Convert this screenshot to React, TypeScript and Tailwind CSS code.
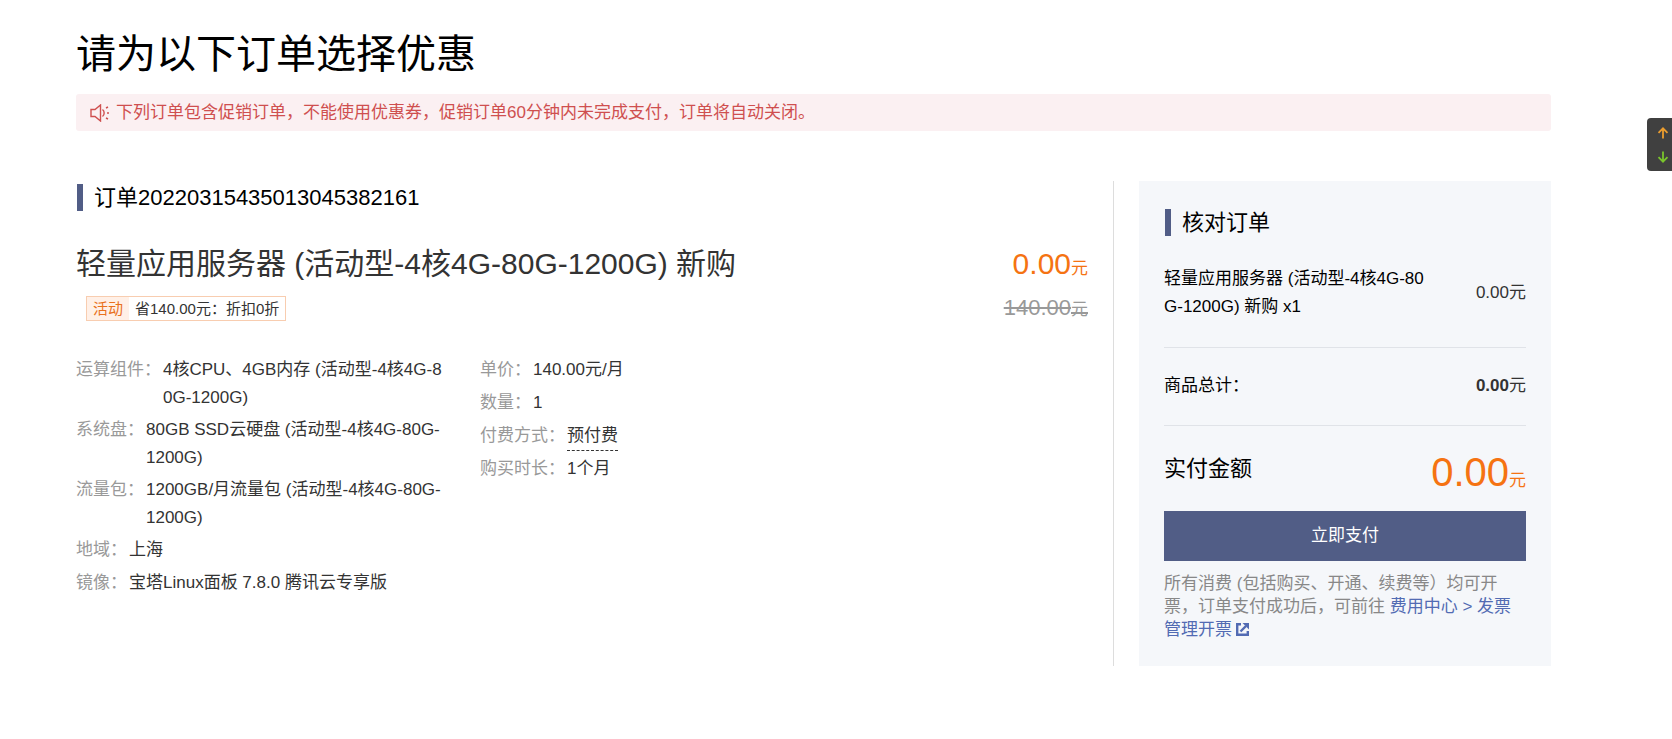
import type { ReactNode } from "react";

type Spec = { label: string; value: string; dashed?: boolean };

const resourceSpecs: Spec[] = [
  { label: "运算组件", value: "4核CPU、4GB内存 (活动型-4核4G-80G-1200G)" },
  { label: "系统盘", value: "80GB SSD云硬盘 (活动型-4核4G-80G-1200G)" },
  { label: "流量包", value: "1200GB/月流量包 (活动型-4核4G-80G-1200G)" },
  { label: "地域", value: "上海" },
  { label: "镜像", value: "宝塔Linux面板 7.8.0 腾讯云专享版" },
];

const billingSpecs: Spec[] = [
  { label: "单价", value: "140.00元/月" },
  { label: "数量", value: "1" },
  { label: "付费方式", value: "预付费", dashed: true },
  { label: "购买时长", value: "1个月" },
];

function SectionHeading({ children }: { children: ReactNode }) {
  return (
    <h2 className="flex h-[33px] items-center gap-[11px] pl-px text-[22px] text-black">
      <span className="h-[27px] w-[6px] bg-[#515d86]" />
      {children}
    </h2>
  );
}

function Yuan() {
  return <span className="text-[17px] leading-none">元</span>;
}

function SpecList({ specs, className }: { specs: Spec[]; className?: string }) {
  return (
    <dl className={className}>
      {specs.map((s) => (
        <div key={s.label} className="flex min-h-[33px] gap-0.5 pb-1 leading-[28px]">
          <dt className="shrink-0 text-[#999]">{s.label}：</dt>
          <dd className={s.dashed ? "border-b border-dashed border-[#333]" : "break-all"}>{s.value}</dd>
        </div>
      ))}
    </dl>
  );
}

function SpeakerIcon() {
  return (
    <svg className="h-[18px] w-[20px] shrink-0" viewBox="0 0 20 18" fill="none" stroke="currentColor" strokeWidth="1.4">
      <path d="M1 5.500h4L10.500 1v16L5 12.500H1z" />
      <path d="M12.500 5.500c2.200 1.600 2.200 5.400 0 7" />
      <path d="M16 4l2-1M17 9h2M16 14l2 1" />
    </svg>
  );
}

function ExternalIcon() {
  return (
    <svg className="ml-1 inline-block size-[13px] align-[-1px]" viewBox="0 0 13 13" fill="none" stroke="currentColor" strokeWidth="2.4">
      <path d="M5 1.200H1.200v10.600h10.600V8" />
      <path d="M4.500 8.500L10 3" />
      <path d="M6.500 0H13v6.500z" fill="currentColor" stroke="none" />
    </svg>
  );
}

export default function App() {
  return (
    <div className="pr-[121px] pb-16 pl-[76px] pt-[26px] font-['Liberation_Sans','Noto_Sans_CJK_SC',sans-serif] text-[17px] text-[#333]">
      <h1 className="text-[40px] leading-[56px] text-black">请为以下订单选择优惠</h1>

      <div className="mt-3 flex h-[37px] items-center gap-1.5 rounded-[3px] bg-[#fbf0f2] pl-[14px] text-[#cf4f4f]">
        <SpeakerIcon />
        <p>下列订单包含促销订单，不能使用优惠券，促销订单60分钟内未完成支付，订单将自动关闭。</p>
      </div>

      <main className="mt-[50px] flex gap-[25px]">
        <section className="flex-1 border-r border-[#ddd] pr-[25px]">
          <SectionHeading>订单20220315435013045382161</SectionHeading>

          <div className="mt-[30px] flex justify-between">
            <div>
              <h3 className="text-[30px] leading-[40px]">轻量应用服务器 (活动型-4核4G-80G-1200G) 新购</h3>
              <div className="mt-3 ml-[10px] flex h-[25px] w-fit items-center border border-[#f8cdb0] text-[15px] leading-[23px]">
                <span className="bg-[#fff0e7] px-1.5 text-[#e9711c]">活动</span>
                <span className="px-1.5">省140.00元：折扣0折</span>
              </div>
            </div>
            <div className="text-right">
              <p className="text-[30px] leading-[40px] text-[#f57312]">
                0.00
                <Yuan />
              </p>
              <p className="mt-2 text-[22px] leading-[32px] text-[#999]">
                <del>
                  140.00
                  <Yuan />
                </del>
              </p>
            </div>
          </div>

          <div className="mt-8 flex gap-[36px]">
            <SpecList specs={resourceSpecs} className="w-[368px]" />
            <SpecList specs={billingSpecs} className="flex-1" />
          </div>
        </section>

        <aside className="w-[412px] bg-[#f5f7fa] p-[25px]">
          <SectionHeading>核对订单</SectionHeading>

          <div className="flex items-center gap-[46px] border-b border-[#e0e3e8] py-[26px]">
            <p className="flex-1 leading-[28px] break-all text-black">轻量应用服务器 (活动型-4核4G-80G-1200G) 新购 x1</p>
            <p>0.00元</p>
          </div>

          <div className="flex justify-between border-b border-[#e0e3e8] pt-6 pb-[25px] leading-[28px]">
            <p className="text-black">商品总计：</p>
            <p>
              <b>0.00</b>元
            </p>
          </div>

          <div className="flex h-[85px] items-center justify-between">
            <p className="text-[22px] text-black">实付金额</p>
            <p className="pt-1.5 text-[40px] leading-[40px] text-[#f57312]">
              0.00
              <Yuan />
            </p>
          </div>

          <button type="button" className="h-[50px] w-full bg-[#515d86] text-white">
            立即支付
          </button>

          <p className="mt-[11px] leading-[23px] text-[#888]">
            所有消费 (包括购买、开通、续费等）均可开票，订单支付成功后，可前往{" "}
            <a href="#invoice" className="text-[#526bb3]">
              费用中心 &gt; 发票管理开票
              <ExternalIcon />
            </a>
          </p>
        </aside>
      </main>

      {/* scroll shortcut pinned to the window edge */}
      <div className="fixed top-[118px] right-0 flex h-[53px] w-[25px] flex-col items-center justify-center gap-3 rounded-l-[4px] bg-[#404040] pl-[6px]">
        <button type="button" aria-label="回到顶部" className="text-[#eb9d2f]">
          <svg className="block size-[12px]" viewBox="0 0 12 12" fill="none" stroke="currentColor" strokeWidth="1.8">
            <path d="M6 11.500V1.500M1.500 5.800L6 1.300l4.500 4.500" />
          </svg>
        </button>
        <button type="button" aria-label="前往底部" className="text-[#7ac52c]">
          <svg className="block size-[12px]" viewBox="0 0 12 12" fill="none" stroke="currentColor" strokeWidth="1.8">
            <path d="M6 .5v10M1.500 6.200L6 10.700l4.500-4.500" />
          </svg>
        </button>
      </div>
    </div>
  );
}
